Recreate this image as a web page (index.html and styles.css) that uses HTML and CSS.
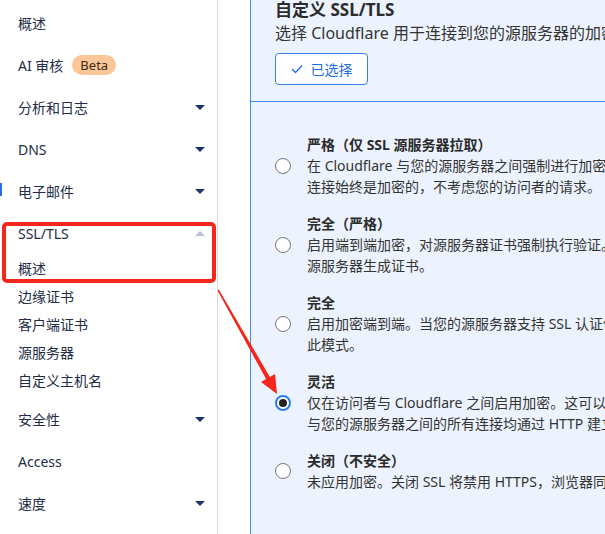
FILE: index.html
```html
<!DOCTYPE html>
<html lang="zh-CN">
<head>
    <meta charset="UTF-8">
    <title>SSL/TLS 概述</title>
    <link rel="stylesheet" href="styles.css">
</head>
<body>
    <div class="layout">
        <nav class="sidebar">
            <ul class="nav-list">
                <li class="nav-item">概述</li>
                <li class="nav-item">AI 审核 <span class="badge">Beta</span></li>
                <li class="nav-item">分析和日志 <span class="caret"></span></li>
                <li class="nav-item">DNS <span class="caret"></span></li>
                <li class="nav-item">电子邮件 <span class="caret"></span></li>
                <li class="nav-item">SSL/TLS <span class="caret caret-up"></span></li>
                <li class="nav-sub">
                    <ul>
                        <li class="sub-item">概述</li>
                        <li class="sub-item">边缘证书</li>
                        <li class="sub-item">客户端证书</li>
                        <li class="sub-item">源服务器</li>
                        <li class="sub-item">自定义主机名</li>
                    </ul>
                </li>
                <li class="nav-item">安全性 <span class="caret"></span></li>
                <li class="nav-item">Access</li>
                <li class="nav-item">速度 <span class="caret"></span></li>
            </ul>
        </nav>

        <main class="panel">
            <section class="panel-head">
                <h2>自定义 SSL/TLS</h2>
                <p class="subtitle">选择 Cloudflare 用于连接到您的源服务器的加密模式。</p>
                <button class="selected-btn">
                    <svg width="12" height="10" viewBox="0 0 12 10"><polyline points="1,5 4.5,8.5 11,1.5" fill="none" stroke="#1f6fe0" stroke-width="1.3"/></svg>
                    已选择
                </button>
            </section>

            <section class="options">
                <label class="option">
                    <span class="radio"></span>
                    <div class="option-text">
                        <div class="option-title">严格（仅 SSL 源服务器拉取）</div>
                        <div class="desc">
                            <span>在 Cloudflare 与您的源服务器之间强制进行加密。使用此模式可确保与您的源服务器的</span>
                            <span>连接始终是加密的，不考虑您的访问者的请求。</span>
                        </div>
                    </div>
                </label>
                <label class="option">
                    <span class="radio"></span>
                    <div class="option-text">
                        <div class="option-title">完全（严格）</div>
                        <div class="desc">
                            <span>启用端到端加密，对源服务器证书强制执行验证。使用 Cloudflare 的 Origin CA 为您的</span>
                            <span>源服务器生成证书。</span>
                        </div>
                    </div>
                </label>
                <label class="option">
                    <span class="radio"></span>
                    <div class="option-text">
                        <div class="option-title">完全</div>
                        <div class="desc">
                            <span>启用加密端到端。当您的源服务器支持 SSL 认证但没有有效的公共可信证书时，请使用</span>
                            <span>此模式。</span>
                        </div>
                    </div>
                </label>
                <label class="option">
                    <span class="radio checked"></span>
                    <div class="option-text">
                        <div class="option-title">灵活</div>
                        <div class="desc">
                            <span>仅在访问者与 Cloudflare 之间启用加密。这可以避免浏览器安全警告，但 Cloudflare</span>
                            <span>与您的源服务器之间的所有连接均通过 HTTP 建立。</span>
                        </div>
                    </div>
                </label>
                <label class="option">
                    <span class="radio"></span>
                    <div class="option-text">
                        <div class="option-title">关闭（不安全）</div>
                        <div class="desc">
                            <span>未应用加密。关闭 SSL 将禁用 HTTPS，浏览器同时会显示警告，表明您的网站不安全。</span>
                        </div>
                    </div>
                </label>
            </section>
        </main>
    </div>

    <!-- screenshot annotations -->
    <div class="edge-mark"></div>
    <div class="mark-box"></div>
    <svg class="mark-arrow" width="605" height="534" viewBox="0 0 605 534">
        <polygon points="217.5,290.5 218.8,289.6 269.9,376.9 275,374.1 277,394 261,381.9 266.1,379.1" fill="#f5261b"/>
    </svg>
</body>
</html>
```

FILE: styles.css
```css
* {
    box-sizing: border-box;
    margin: 0;
    padding: 0;
}

html, body {
    width: 605px;
    height: 534px;
    overflow: hidden;
}

body {
    font-family: "Noto Sans", "Noto Sans CJK SC", sans-serif;
    font-size: 14px;
    color: #313131;
    background: #fff;
    position: relative;
}

.layout {
    display: flex;
    height: 534px;
}

/* Sidebar */
.sidebar {
    width: 218px;
    flex-shrink: 0;
    border-right: 1px solid #d9d9d9;
    padding-top: 2px;
}

.nav-list,
.nav-sub ul {
    list-style: none;
}

.nav-item {
    height: 42px;
    display: flex;
    align-items: center;
    gap: 8px;
    padding: 0 12px 0 18px;
    color: #222c45;
}

.sub-item {
    height: 28px;
    display: flex;
    align-items: center;
    padding-left: 18px;
    color: #222c45;
}

.nav-sub {
    padding-bottom: 4px;
}

.badge {
    background: #fbc797;
    color: #3b2a1c;
    font-size: 13px;
    line-height: 20px;
    height: 20px;
    padding: 0 8px;
    border-radius: 10px;
    margin-left: 1px;
}

.caret {
    margin-left: auto;
    width: 0;
    height: 0;
    border-left: 5px solid transparent;
    border-right: 5px solid transparent;
    border-top: 5px solid #1b3465;
}

.caret-up {
    border-top: none;
    border-bottom: 5px solid #b8c2d2;
}

/* Main panel */
.panel {
    width: 760px;
    flex-shrink: 0;
    margin-left: 32px;
    background: #edf3fe;
    border-left: 1px solid #4288f2;
}

.panel-head {
    padding: 0 24px 16px;
    border-bottom: 1px solid #4288f2;
}

.panel-head h2 {
    font-size: 17px;
    line-height: 20px;
    font-weight: 700;
    color: #2b2b2b;
}

.subtitle {
    font-size: 16px;
    line-height: 24px;
    margin-top: 1px;
    white-space: nowrap;
    color: #333;
}

.selected-btn {
    margin-top: 8px;
    width: 93px;
    height: 32px;
    display: flex;
    align-items: center;
    justify-content: center;
    gap: 8px;
    background: #fff;
    border: 1px solid #3b80e6;
    border-radius: 4px;
    color: #1f6fe0;
    font-family: inherit;
    font-size: 14px;
}

.options {
    padding: 32px 24px 0;
    display: flex;
    flex-direction: column;
    gap: 16px;
}

.option {
    display: flex;
    align-items: center;
    gap: 16px;
}

.radio {
    width: 16px;
    height: 16px;
    flex-shrink: 0;
    border: 1px solid #767676;
    border-radius: 50%;
    background: #fff;
    display: flex;
    align-items: center;
    justify-content: center;
}

.radio.checked {
    border: 2px solid #2b7cf0;
}

.radio.checked::after {
    content: "";
    width: 8px;
    height: 8px;
    border-radius: 50%;
    background: #222;
}

.option-title {
    font-weight: 700;
    line-height: 21px;
    color: #2b2b2b;
}

.desc {
    line-height: 21px;
    color: #333;
}

.desc span {
    display: block;
    white-space: nowrap;
}

/* Annotations drawn on the screenshot */
.edge-mark {
    position: absolute;
    left: 0;
    top: 183px;
    width: 2px;
    height: 13px;
    background: #2a6fd6;
}

.mark-box {
    position: absolute;
    left: 2px;
    top: 222px;
    width: 214px;
    height: 61px;
    border: 4px solid #f5261b;
    border-radius: 5px;
}

.mark-arrow {
    position: absolute;
    left: 0;
    top: 0;
    pointer-events: none;
}
```
